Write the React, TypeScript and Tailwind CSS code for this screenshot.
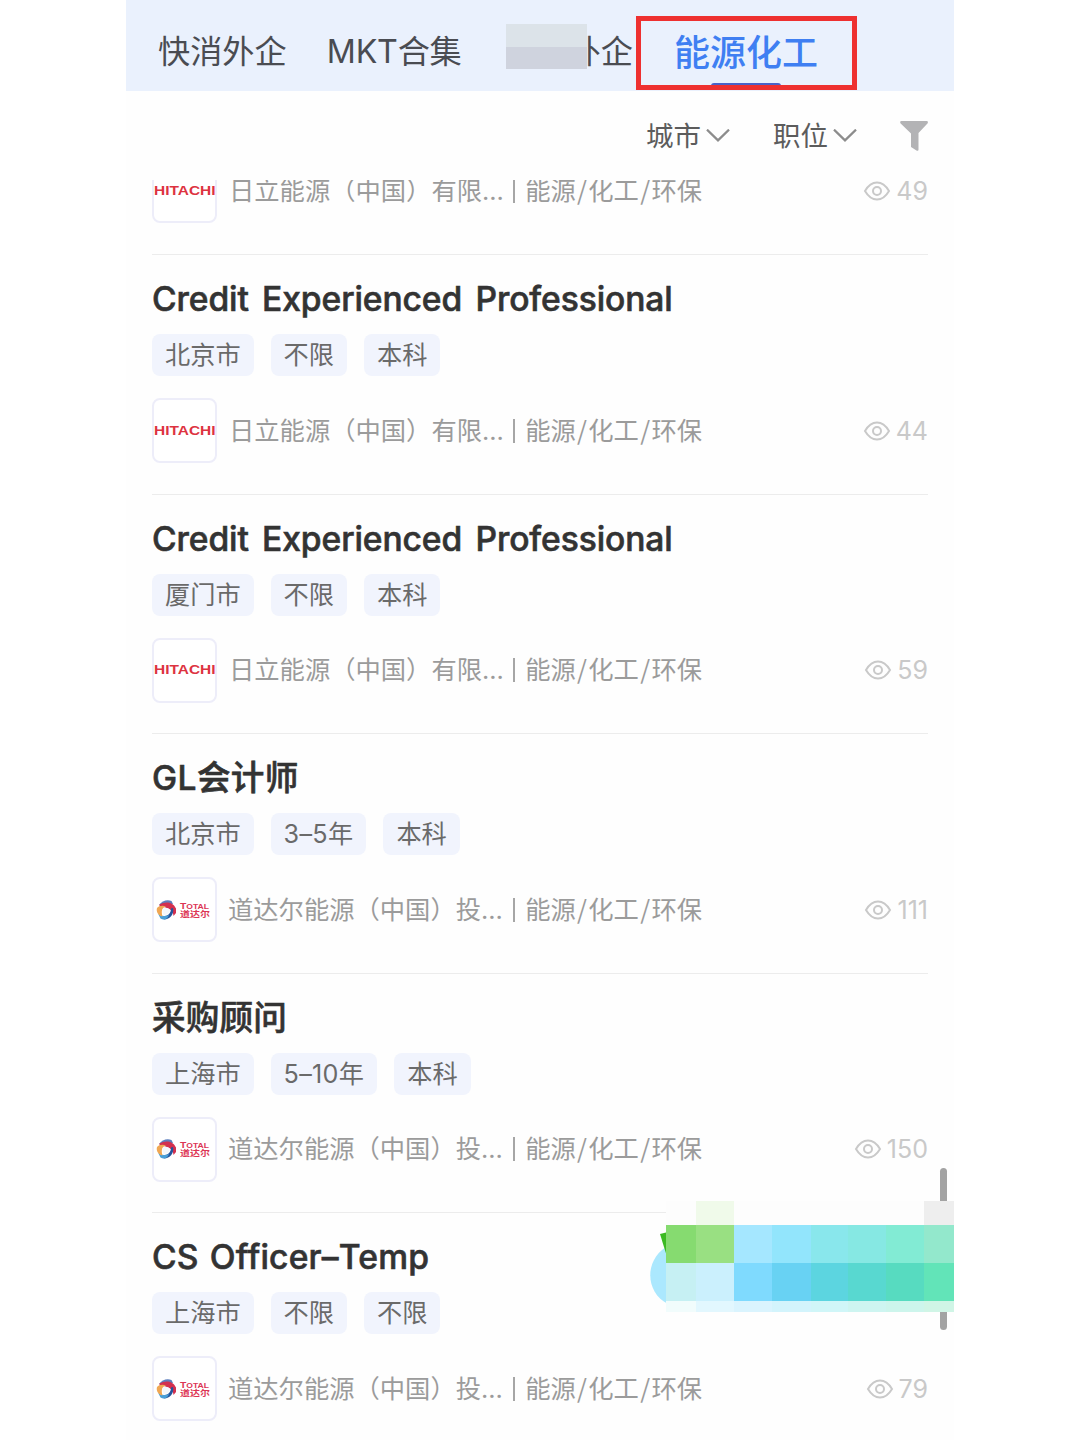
import clsx from 'clsx';

type Brand = 'hitachi' | 'total';

interface Job {
  readonly id: number;
  readonly title: string;
  readonly titleClass: string;
  readonly tags: readonly string[];
  readonly brand: Brand;
  readonly views: number;
}

const EN_TITLE = 'tracking-[-0.1px] [word-spacing:4.5px]';

const JOBS: readonly Job[] = [
  { id: 1, title: 'Credit Experienced Professional', titleClass: EN_TITLE, tags: ['北京市', '不限', '本科'], brand: 'hitachi', views: 44 },
  { id: 2, title: 'Credit Experienced Professional', titleClass: EN_TITLE, tags: ['厦门市', '不限', '本科'], brand: 'hitachi', views: 59 },
  { id: 3, title: 'GL会计师', titleClass: 'tracking-[0.4px]', tags: ['北京市', '3–5年', '本科'], brand: 'total', views: 111 },
  { id: 4, title: '采购顾问', titleClass: 'tracking-[0.2px]', tags: ['上海市', '5–10年', '本科'], brand: 'total', views: 150 },
  { id: 5, title: 'CS Officer–Temp', titleClass: 'tracking-[0.2px] [word-spacing:2px]', tags: ['上海市', '不限', '不限'], brand: 'total', views: 79 },
];

const COMPANY: Record<Brand, string> = {
  hitachi: '日立能源（中国）有限...',
  total: '道达尔能源（中国）投...',
};

const MOSAIC = [
  'bg-[#fdfdfd]', 'bg-[#f0faea]', 'bg-[#fdfdfd]', 'bg-[#fdfdfd]', 'bg-[#fdfdfd]', 'bg-[#fdfdfd]', 'bg-[#fdfdfd]', 'bg-[#eeeeee]',
  'bg-[#86db70]', 'bg-[#99e082]', 'bg-[#a5e7ff]', 'bg-[#92e5fc]', 'bg-[#89e7ec]', 'bg-[#86e8e3]', 'bg-[#82ebd4]', 'bg-[#93e8cc]',
  'bg-[#c6f0f3]', 'bg-[#cbf0fd]', 'bg-[#7fdafe]', 'bg-[#68d2f3]', 'bg-[#5cd5e0]', 'bg-[#58d8d0]', 'bg-[#57dbc0]', 'bg-[#62e4b8]',
  'bg-[#f1fcfc]', 'bg-[#e2f7fe]', 'bg-[#daf4fe]', 'bg-[#d3f4fc]', 'bg-[#d0f6f8]', 'bg-[#cef5f1]', 'bg-[#cdf5ec]', 'bg-[#d0f5e6]',
];

function Chevron() {
  return (
    <svg width="24" height="14" viewBox="0 0 24 14" fill="none" stroke="#8c8c8c" strokeWidth="2.2">
      <path d="M1 .6 12 11.400 23 .6" />
    </svg>
  );
}

function Views({ count }: { count: number }) {
  return (
    <div className="ml-auto flex items-center gap-[5px] text-[25px] leading-[20px] text-[#c9c9c9]">
      <svg width="28" height="20" viewBox="0 0 28 20" fill="none" stroke="#c9c9c9" strokeWidth="2">
        <path d="M2 10C5.500 4 9 1.500 14 1.500S22.500 4 26 10C22.500 16 19 18.500 14 18.500S5.500 16 2 10Z" />
        <circle cx="14" cy="10" r="4" />
      </svg>
      <span>{count}</span>
    </div>
  );
}

function Logo({ brand }: { brand: Brand }) {
  return (
    <div className="flex size-[65px] shrink-0 items-center justify-center rounded-[8px] border-2 border-[#ededf9] bg-white">
      {brand === 'hitachi' ? (
        <svg width="61" height="14" viewBox="0 0 61 14">
          <text x="0" y="11.200" textLength="61.500" lengthAdjust="spacingAndGlyphs" fontFamily="Liberation Sans" fontWeight="700" fontSize="13.500" fill="#dd3340">
            HITACHI
          </text>
        </svg>
      ) : (
        <svg width="57" height="22" viewBox="0 0 57 22">
          <path d="M3 6C6 2 11 0 15.500 2L17 5 8 6Z" fill="#5e7fbd" />
          <path d="M3.500 5.500C9 2 17 2.500 20 9.500V14L17.500 17C17.500 12 13 8 3.500 7.500Z" fill="#d3304e" />
          <path d="M17 9C18.500 15 14 20.500 8 20.500L5 17C11 18 15 15 15 9.500Z" fill="#24549c" />
          <path d="M2 14.500C5 17.500 9 17.500 13 16 12 19.500 8.500 22 4.500 19.500Z" fill="#489fd8" />
          <path d="M1 9C3 6.500 7 6 10 7.500 6 8.500 5 12 6.500 17.500 2 16.500 0 12.500 1 9Z" fill="#f0a753" />
          <path d="M7 9.500C11 8 14 9.500 14 12 13 15 10.500 16 7.500 16 6.500 13 6 11 7 9.500Z" fill="#f4f7fb" />
          <text x="24" y="9.500" textLength="29" lengthAdjust="spacingAndGlyphs" fontFamily="Liberation Sans" fontWeight="700" fontSize="8.500" fill="#dc3554">
            T<tspan fontSize="7">OTAL</tspan>
          </text>
          <text x="24" y="18" textLength="30" lengthAdjust="spacingAndGlyphs" fontFamily="Noto Sans CJK SC" fontWeight="700" fontSize="8" fill="#dc3554">
            道达尔
          </text>
        </svg>
      )}
    </div>
  );
}

function Slash() {
  return <span className="mx-[1.3px] font-['Noto_Sans_CJK_SC']">/</span>;
}

function CompanyRow({ brand, views }: { brand: Brand; views: number }) {
  return (
    <div className="flex h-[65px] items-center">
      <Logo brand={brand} />
      <div
        className={clsx(
          'flex items-center justify-between text-[25.3px] leading-[20px] whitespace-nowrap text-[#9b9b9b]',
          brand === 'hitachi' ? 'ml-[12px] w-[473px]' : 'ml-[11px] w-[474px]',
        )}
      >
        <span>{COMPANY[brand]}</span>
        <span className="h-[24px] w-[2px] bg-[#a6a6a6]" />
        <span className="-mt-[2px]">
          能源
          <Slash />
          化工
          <Slash />
          环保
        </span>
      </div>
      <Views count={views} />
    </div>
  );
}

function JobItem({ job }: { job: Job }) {
  return (
    <div className="border-b border-[#ececec] pt-[24px] pb-[30.5px]">
      <h2
        className={clsx(
          'h-[40px] text-[33.6px] leading-[39px] font-medium whitespace-nowrap text-[#333333] [-webkit-text-stroke:0.6px_#333333]',
          job.titleClass,
        )}
      >
        {job.title}
      </h2>
      <div className="mt-[15px] flex gap-[17px]">
        {job.tags.map((tag, i) => (
          <span
            key={i}
            className={clsx(
              'h-[42px] rounded-[8px] bg-[#f1f4fd] px-[13px] text-[25.2px] leading-[42px] whitespace-nowrap text-[#6a6a6a]',
              tag.includes('–') && 'tracking-[0.3px]',
            )}
          >
            {tag}
          </span>
        ))}
      </div>
      <div className="mt-[22px]">
        <CompanyRow brand={job.brand} views={job.views} />
      </div>
    </div>
  );
}

export default function App() {
  return (
    <div className="h-[1440px] w-[1080px] overflow-hidden bg-white font-['Inter','Noto_Sans_CJK_SC',sans-serif]">
      <div className="relative mx-auto flex h-full w-[828px] flex-col bg-[#fefefe]">
        {/* Category tabs */}
        <div className="flex h-[91px] shrink-0 items-center bg-[#eaf1fd] pb-[12px] pl-[32px] text-[32.2px] whitespace-nowrap text-[#4a4c52]">
          <span className="pt-[26px]">快消外企</span>
          <span className="ml-[40px] pt-[26px] tracking-[-0.2px]">MKT合集</span>
          <div className="z-10 mt-[13px] ml-[44px] flex h-[45px] w-[81px] flex-col">
            <div className="h-[23px] bg-[#dce3e9]" />
            <div className="h-[22px] bg-[#cfd3de]" />
          </div>
          <span className="-ml-[18px] pt-[26px]">外企</span>
          <span className="ml-[41px] pt-[26px] text-[36px] font-medium text-[#3f7ff2]">能源化工</span>
        </div>
        <div className="absolute top-[83px] left-[585px] h-[6px] w-[70px] rounded-full bg-[#4a62c8]" />
        <div className="absolute top-[15.5px] left-[510px] h-[74px] w-[221px] border-[5px] border-[#ee3030]" />

        {/* Filters */}
        <div className="flex h-[89px] shrink-0 items-center justify-end pr-[26px] text-[27.5px] text-[#5c5c5c]">
          <div className="flex items-center gap-[5px]">
            <span className="pt-[3px]">城市</span>
            <Chevron />
          </div>
          <div className="ml-[43px] flex items-center gap-[5px]">
            <span className="pt-[3px]">职位</span>
            <Chevron />
          </div>
          <svg className="ml-[43px]" width="28" height="30" viewBox="0 0 28 30" fill="#b3b3b5">
            <path d="M1.500 0h25q2 0 1.200 2.200L18.500 12v16.500q0 2-2 1L11 26V12.500L.4 2.200Q-.4 0 1.500 0Z" />
          </svg>
        </div>

        {/* Job list, scrolled part-way through the first entry */}
        <div className="flex-1 overflow-hidden px-[26px]">
          <div className="-mt-[22px] border-b border-[#ececec] pb-[31px]">
            <CompanyRow brand="hitachi" views={49} />
          </div>
          {JOBS.map((job) => (
            <JobItem key={job.id} job={job} />
          ))}
        </div>

        {/* Scrollbar and censored floating badge */}
        <div className="absolute top-[1168px] left-[814px] h-[162px] w-[7px] rounded-full bg-[#a3a3a3]" />
        <svg className="absolute top-[1230px] left-[524px]" width="20" height="76" viewBox="0 0 20 76">
          <path d="M20 15C-6 27-6 62 18 74Z" fill="#abe8fe" />
          <path d="M10 4 18 2V30Z" fill="#3cba22" />
        </svg>
        <div className="absolute top-[1201px] left-[540px] grid h-[111px] w-[288px] grid-cols-[30px_38px_38px_39px_37px_38px_38px_30px] grid-rows-[24px_38px_38px_11px]">
          {MOSAIC.map((color, i) => (
            <div key={i} className={color} />
          ))}
        </div>
      </div>
    </div>
  );
}
